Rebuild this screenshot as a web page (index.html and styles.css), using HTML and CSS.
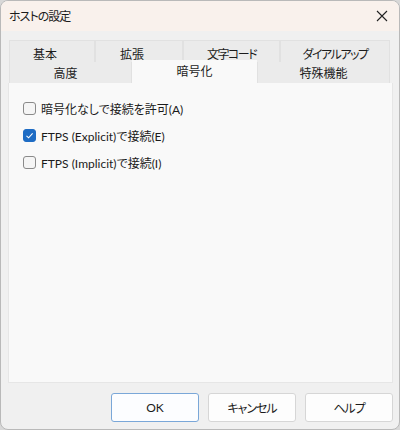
FILE: index.html
```html
<!DOCTYPE html>
<html lang="ja">
<head>
<meta charset="utf-8">
<link rel="stylesheet" href="styles.css">
</head>
<body>
<div class="window">
  <div class="titlebar">
    <span class="title">ホストの設定</span>
    <span class="close"><svg width="12" height="12" viewBox="0 0 12 12"><path d="M1 1L11 11M11 1L1 11" stroke="#222" stroke-width="1.1" fill="none"/></svg></span>
  </div>
  <div class="content">
    <div class="tabs">
      <div class="tabrow row1">
        <div class="tab t1">基本</div>
        <div class="tab t2">拡張</div>
        <div class="tab t3 kana">文字コード</div>
        <div class="tab t4 kana">ダイアルアップ</div>
      </div>
      <div class="tabrow row2">
        <div class="tab t5">高度</div>
        <div class="tab t6 active">暗号化</div>
        <div class="tab t7">特殊機能</div>
      </div>
    </div>
    <div class="panel">
      <label class="opt"><span class="box"></span><span>暗号化なしで接続を許可(A)</span></label>
      <label class="opt"><span class="box checked"><svg width="13" height="13" viewBox="0 0 13 13"><path d="M3.5 6.8L5.6 8.8L9.6 4.4" stroke="#fff" stroke-width="1.1" fill="none"/></svg></span><span>FTPS (Explicit)で接続(E)</span></label>
      <label class="opt"><span class="box"></span><span>FTPS (Implicit)で接続(I)</span></label>
    </div>
    <div class="buttons">
      <button class="btn default">OK</button>
      <button class="btn kana">キャンセル</button>
      <button class="btn kana">ヘルプ</button>
    </div>
  </div>
</div>
</body>
</html>
```
FILE: styles.css
```css
html, body {
  margin: 0;
  padding: 0;
  background: #d8d8d8;
}
body {
  width: 400px;
  height: 430px;
  font-family: "Lato", "Noto Sans CJK JP", sans-serif;
  font-feature-settings: "palt";
  font-size: 12px;
  color: #1b1b1b;
}
.window {
  width: 398px;
  height: 428px;
  border: 1px solid #b9b9b9;
  border-radius: 8px;
  overflow: hidden;
  background: #f0f0f0;
  display: flex;
  flex-direction: column;
}
.titlebar {
  height: 30px;
  background: #f9f1ec;
  display: flex;
  align-items: center;
  justify-content: space-between;
  padding: 0 10px 0 8px;
  flex: none;
}
.title {
  font-size: 12px;
  margin-top: -1px;
  letter-spacing: -1px;
}
.close {
  display: flex;
  margin-right: 1px;
}
.content {
  padding: 9px 6px 0 7px;
  display: flex;
  flex-direction: column;
}
.tabs {
  display: flex;
  flex-direction: column;
  padding: 0 1px;
}
.tabrow {
  display: flex;
  height: 22px;
}
.row2 {
  height: 21px;
}
.tab {
  background: #ebebeb;
  border: 1px solid #e1e1e1;
  border-bottom: none;
  box-sizing: border-box;
  display: flex;
  align-items: center;
  justify-content: center;
  font-size: 12px;
  line-height: 1;
  padding-top: 2px;
}
.row1 .tab {
  padding-top: 6px;
}
.row2 .tab {
  border-top: none;
}
.kana {
  letter-spacing: -1.5px;
}
.t1 { width: 86px; padding-right: 14px; }
.t2 { width: 88px; padding-right: 14px; }
.t3 { width: 97px; }
.t4 { width: 110px; }
.t5 { width: 123px; padding-right: 10px; }
.t6 { width: 125px; }
.t7 { width: 133px; }
.tab.active {
  background: #f9f9f9;
  border: none;
  margin-top: -2px;
  height: 24px;
  padding-top: 0;
}
.panel {
  height: 300px;
  background: #f9f9f9;
  border: 1px solid #e6e6e6;
  border-top: none;
  box-sizing: border-box;
  padding: 16px 0 0 14px;
  display: flex;
  flex-direction: column;
  gap: 8px;
}
.opt {
  display: flex;
  align-items: center;
  gap: 5px;
  height: 19px;
  font-size: 12px;
}
.box {
  width: 13px;
  height: 13px;
  box-sizing: border-box;
  border: 1px solid #8a8a8a;
  border-radius: 3px;
  background: #f5f5f5;
  display: flex;
}
.box.checked {
  background: #1e6cc4;
  border-color: #1e6cc4;
}
.box.checked svg {
  margin: -1px;
}
.buttons {
  display: flex;
  justify-content: flex-end;
  gap: 9px;
  margin-top: 10px;
}
.btn {
  width: 88px;
  height: 29px;
  background: #fdfdfd;
  border: 1px solid #d6d6d6;
  border-radius: 3px;
  font-family: "Lato", "Noto Sans CJK JP", sans-serif;
  font-feature-settings: "palt";
  font-size: 12px;
  color: #1b1b1b;
  padding: 0;
}
.btn.kana {
  letter-spacing: -1px;
}
.btn.default {
  border-color: #7aa7d8;
  background: #fcfdff;
}
```
